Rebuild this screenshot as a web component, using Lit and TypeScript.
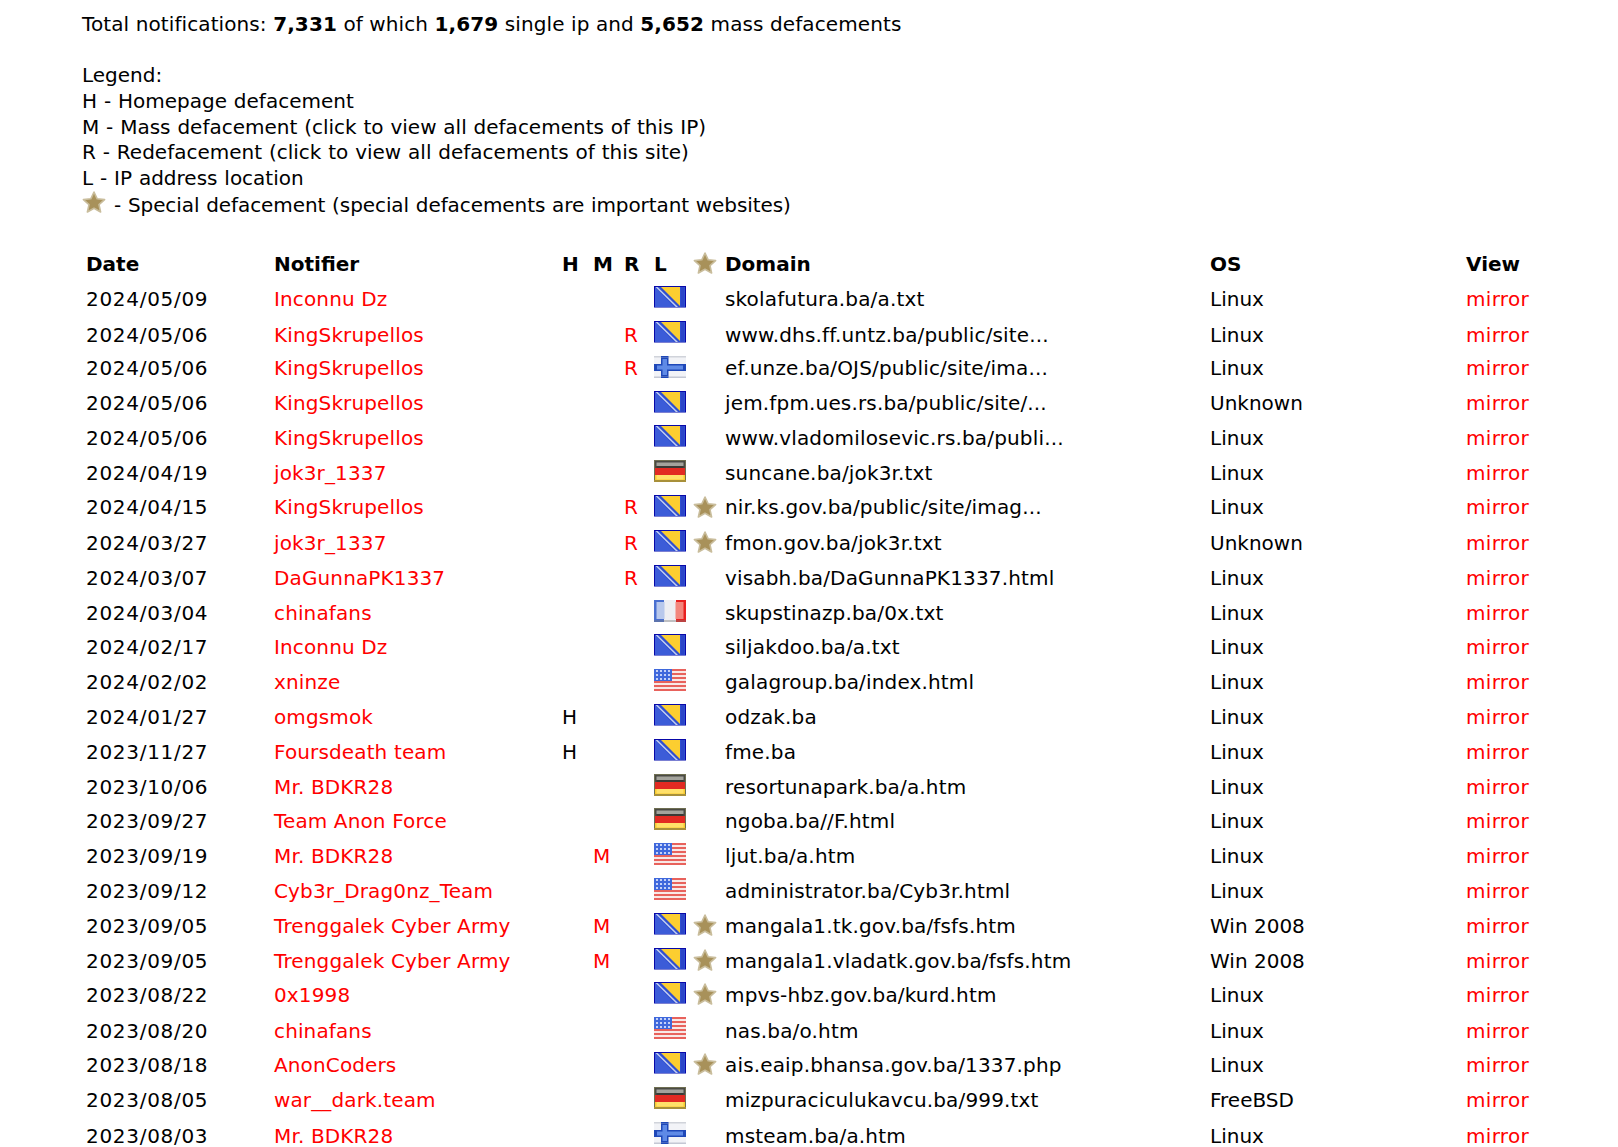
import { LitElement, html, css, svg } from "lit";
import { customElement } from "lit/decorators.js";

type Row = [string, string, string, string, string, string, boolean, string, string, number?];
const rows: Row[] = [
  ["2024/05/09", "Inconnu Dz", "", "", "", "ba", false, "skolafutura.ba/a.txt", "Linux"],
  ["2024/05/06", "KingSkrupellos", "", "", "R", "ba", false, "www.dhs.ff.untz.ba/public/site...", "Linux", 1],
  ["2024/05/06", "KingSkrupellos", "", "", "R", "fi", false, "ef.unze.ba/OJS/public/site/ima...", "Linux", -1],
  ["2024/05/06", "KingSkrupellos", "", "", "", "ba", false, "jem.fpm.ues.rs.ba/public/site/...", "Unknown", -1],
  ["2024/05/06", "KingSkrupellos", "", "", "", "ba", false, "www.vladomilosevic.rs.ba/publi...", "Linux"],
  ["2024/04/19", "jok3r_1337", "", "", "", "de", false, "suncane.ba/jok3r.txt", "Linux"],
  ["2024/04/15", "KingSkrupellos", "", "", "R", "ba", true, "nir.ks.gov.ba/public/site/imag...", "Linux", -1],
  ["2024/03/27", "jok3r_1337", "", "", "R", "ba", true, "fmon.gov.ba/jok3r.txt", "Unknown"],
  ["2024/03/07", "DaGunnaPK1337", "", "", "R", "ba", false, "visabh.ba/DaGunnaPK1337.html", "Linux"],
  ["2024/03/04", "chinafans", "", "", "", "fr", false, "skupstinazp.ba/0x.txt", "Linux"],
  ["2024/02/17", "Inconnu Dz", "", "", "", "ba", false, "siljakdoo.ba/a.txt", "Linux"],
  ["2024/02/02", "xninze", "", "", "", "us", false, "galagroup.ba/index.html", "Linux"],
  ["2024/01/27", "omgsmok", "H", "", "", "ba", false, "odzak.ba", "Linux"],
  ["2023/11/27", "Foursdeath team", "H", "", "", "ba", false, "fme.ba", "Linux"],
  ["2023/10/06", "Mr. BDKR28", "", "", "", "de", false, "resortunapark.ba/a.htm", "Linux"],
  ["2023/09/27", "Team Anon Force", "", "", "", "de", false, "ngoba.ba//F.html", "Linux"],
  ["2023/09/19", "Mr. BDKR28", "", "M", "", "us", false, "ljut.ba/a.htm", "Linux"],
  ["2023/09/12", "Cyb3r_Drag0nz_Team", "", "", "", "us", false, "administrator.ba/Cyb3r.html", "Linux"],
  ["2023/09/05", "Trenggalek Cyber Army", "", "M", "", "ba", true, "mangala1.tk.gov.ba/fsfs.htm", "Win 2008"],
  ["2023/09/05", "Trenggalek Cyber Army", "", "M", "", "ba", true, "mangala1.vladatk.gov.ba/fsfs.htm", "Win 2008"],
  ["2023/08/22", "0x1998", "", "", "", "ba", true, "mpvs-hbz.gov.ba/kurd.htm", "Linux"],
  ["2023/08/20", "chinafans", "", "", "", "us", false, "nas.ba/o.htm", "Linux", 1],
  ["2023/08/18", "AnonCoders", "", "", "", "ba", true, "ais.eaip.bhansa.gov.ba/1337.php", "Linux"],
  ["2023/08/05", "war__dark.team", "", "", "", "de", false, "mizpuraciculukavcu.ba/999.txt", "FreeBSD"],
  ["2023/08/03", "Mr. BDKR28", "", "", "", "fi", false, "msteam.ba/a.htm", "Linux", 1],
];

const flags: Record<string, unknown> = {
  ba: svg`<rect width="32" height="22" fill="#0808a8"/><rect x="1" y="1" width="30" height="20" fill="#2f4fd0"/>
    <polygon points="1,1 20,21 1,21" fill="#3c5cd8"/>
    <polygon points="7,1 26,1 26,20" fill="#fcce30"/>
    <polyline points="2,0.5 24,22" fill="none" stroke="#c4cef0" stroke-width="1.5"/>
    <rect x="27" y="1" width="3" height="20" fill="#2b45c8"/>
    <rect x=".5" y=".5" width="31" height="21" fill="none" stroke="#0808a8"/>
    <rect x="0" y="21.4" width="32" height=".6" fill="#c8d0f0"/>`,
  fi: svg`<rect width="32" height="22" fill="#f2f3f7"/>
    <rect x="7" width="7.5" height="22" fill="#1f48b8"/><rect y="8" width="32" height="7" fill="#1f48b8"/>
    <rect x="8.5" y="3" width="4.5" height="16" fill="#5f8ae6"/><rect x="3" y="9.5" width="26" height="4" fill="#5f8ae6"/>
    <rect y="0" width="32" height="1.5" fill="#d0d3da"/><rect y="20.5" width="32" height="1.5" fill="#c4c8d4"/>
    <rect x="7" width="7.5" height="1.5" fill="#1f48b8"/><rect x="7" y="20.5" width="7.5" height="1.5" fill="#1f48b8"/>`,
  de: svg`<rect width="32" height="8" fill="#4a4a44"/><rect y="8" width="32" height="7" fill="#e22a22"/><rect y="15" width="32" height="7" fill="#f9cb2e"/>
    <rect x="2.5" y="2.5" width="27" height="3.5" fill="#a3a39c"/>
    <rect x="2.5" y="6" width="27" height="2" fill="#3a3a36"/>
    <rect x="2.5" y="15" width="27" height="4.5" fill="#ffe06a"/>
    <rect x=".5" y=".5" width="31" height="21" fill="none" stroke="#6e6e52"/>
    <rect x="0" y="20" width="32" height="2" fill="#a8903a"/>`,
  fr: svg`<rect width="32" height="22" fill="#eeeef2"/><rect width="10" height="22" fill="#4a70d0"/><rect x="22" width="10" height="22" fill="#e8201f"/>
    <rect x="2.5" y="2" width="8" height="17" fill="#b8c8ec"/><rect x="21.5" y="2" width="8" height="17" fill="#f3867c"/>
    <rect y="20" width="32" height="2" fill="#777" opacity=".4"/>`,
  us: svg`<rect width="32" height="22" fill="#f8e8e6"/>
    ${[0, 4, 8, 12, 16, 20].map((y) => svg`<rect y="${y}" width="32" height="2" fill="#e8625c"/>`)}
    <rect width="18" height="12" fill="#3f68dc"/>
    ${[2, 6, 10].map((y) => [3, 7, 11, 15].map((x) => svg`<circle cx="${x}" cy="${y}" r="1.1" fill="#e6ecff"/>`))}`,
};

const flag = (c: string) => html`<svg class="flag" viewBox="0 0 32 22" width="32" height="22">${flags[c]}</svg>`;
const star = () => html`<svg class="star" viewBox="0 0 24 24" width="24" height="24">
  <polygon points="12,2 15.2,8.8 22.6,9.6 17,14.6 18.6,22 12,18.2 5.4,22 7,14.6 1.4,9.6 8.8,8.8" fill="#a8915a" stroke="#c9bd9c" stroke-width="1.6" stroke-linejoin="round"/></svg>`;

@customElement("app-root")
export class AppRoot extends LitElement {
  static styles = css`
    :host { display: block; background: #fff; color: #000; font-family: "DejaVu Sans", Verdana, sans-serif; font-size: 20px; height: 1147px; overflow: hidden; }
    .page { padding: 14px 0 0 82px; }
    .total { line-height: 20px; margin-bottom: 29px; letter-spacing: .1px; }
    .legend { line-height: 25.8px; word-spacing: .5px; }
    .legend .line { display: flex; align-items: center; height: 25.8px; white-space: pre; }
    .legend .starline { padding-top: 2px; box-sizing: border-box; letter-spacing: -.08px; }
    .legend .star { margin: -8px 8px 0 0; }
    .head, .row { display: grid; grid-template-columns: 188px 288px 31px 31px 30px 39px 32px 485px 256px 120px; margin-left: 4px; align-items: center; white-space: nowrap; }
    .head { font-weight: 700; margin-top: 29px; height: 35px; }
    .row { height: 34.82px; box-sizing: border-box; padding-top: max(0px, calc(var(--dy) * 2)); padding-bottom: max(0px, calc(var(--dy) * -2)); }
    .red { color: #f00; }
    .date { letter-spacing: .7px; }
    .notifier { letter-spacing: .13px; }
    .domain { letter-spacing: .16px; }
    .mirror { letter-spacing: .3px; }
    .cell { position: relative; }
    .flagcell { height: 0; }
    .flag { display: block; position: absolute; left: 0; top: calc(-13px - var(--dy)); filter: blur(.45px); }
    .cell .star { display: block; position: absolute; left: 0; top: calc(-13px - var(--dy)); filter: blur(.4px); }
    .head { --dy: 0px; }
  `;
  render() {
    return html`<div class="page">
      <div class="total">Total notifications: <b>7,331</b> of which <b>1,679</b> single ip and <b>5,652</b> mass defacements</div>
      <div class="legend">
        <div class="line">Legend:</div>
        <div class="line">H - Homepage defacement</div>
        <div class="line">M - Mass defacement (click to view all defacements of this IP)</div>
        <div class="line">R - Redefacement (click to view all defacements of this site)</div>
        <div class="line">L - IP address location</div>
        <div class="line starline">${star()}- Special defacement (special defacements are important websites)</div>
      </div>
      <div class="head">
        <div>Date</div><div>Notifier</div><div>H</div><div>M</div><div>R</div><div>L</div>
        <div class="cell flagcell">${star()}</div><div>Domain</div><div>OS</div><div>View</div>
      </div>
      ${rows.map((r) => html`<div class="row" style="--dy:${r[9] ?? 0}px">
        <div class="date">${r[0]}</div><div class="red notifier">${r[1]}</div><div>${r[2]}</div><div class="red">${r[3]}</div><div class="red">${r[4]}</div>
        <div class="cell flagcell">${flag(r[5])}</div>
        <div class="cell flagcell">${r[6] ? star() : ""}</div>
        <div class="domain">${r[7]}</div><div>${r[8]}</div><div class="red mirror">mirror</div>
      </div>`)}
    </div>`;
  }
}
